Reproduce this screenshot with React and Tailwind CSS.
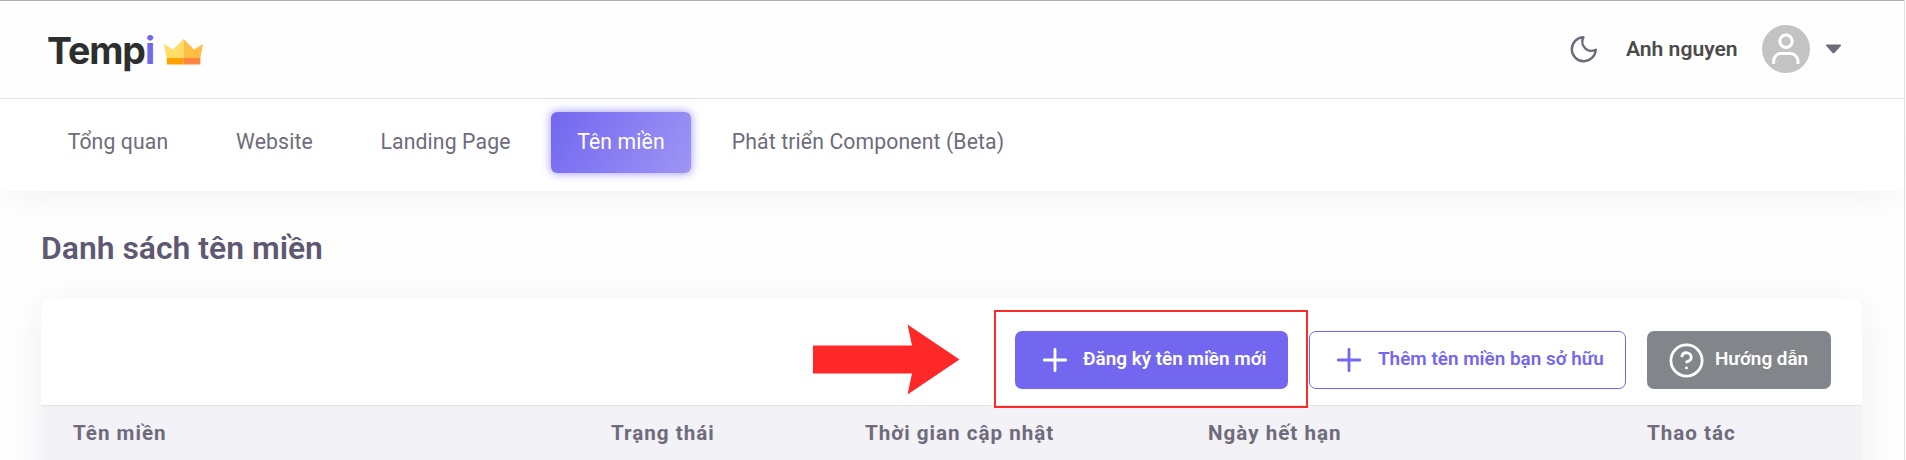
import React from "react";

const NAV = [
  { label: "Tổng quan", box: "ml-[40px] w-[156px]" },
  { label: "Website", box: "ml-[14px] w-[129px]" },
  { label: "Landing Page", box: "ml-[14px] w-[185px]" },
  { label: "Tên miền", box: "ml-[13px] w-[140px]", active: true },
  { label: "Phát triển Component (Beta)", box: "ml-[14px] w-[326px]" },
];

const COLUMNS = [
  { label: "Tên miền", width: "w-[538px]" },
  { label: "Trạng thái", width: "w-[254px]" },
  { label: "Thời gian cập nhật", width: "w-[343px]" },
  { label: "Ngày hết hạn", width: "w-[439px]" },
  { label: "Thao tác", width: "w-[200px]" },
];

function Logo() {
  return (
    <div className="ml-[47px] flex items-center">
      <div className="flex w-[109px] pt-[2px] font-['Inter'] text-[37.5px] leading-none font-[650] tracking-[-1.1px] text-[#2d2e2e]">
        <span>Temp</span>
        <span className="text-[#7367f0]">i</span>
      </div>
      <svg className="ml-[8px] mt-[5px]" width="39" height="26" viewBox="0 0 39 26">
        <path d="M0 5 L9 10.5 L19.5 0 V19.5 H2.8 Z" fill="#ffdd67" />
        <path d="M39 5 L30 10.5 L19.5 0 V19.5 H36.2 Z" fill="#ffbd43" />
        <path d="M2.8 19 H19.5 V25.5 H2.8 Z" fill="#ffa100" />
        <path d="M19.5 19 H36.4 V25.5 H19.5 Z" fill="#ff8541" />
      </svg>
    </div>
  );
}

function Moon() {
  return (
    <svg width="28" height="28" viewBox="0 0 28 28" fill="none" stroke="#6e6b7b" strokeWidth="2.4" strokeLinecap="round" strokeLinejoin="round">
      <path d="M13.5 2.2 A12 12 0 1 0 25.8 14.8 A9.2 9.2 0 0 1 13.5 2.2 Z" />
    </svg>
  );
}

function Plus() {
  return (
    <svg width="24" height="24" viewBox="0 0 24 24" fill="none" stroke="currentColor" strokeWidth="2.8" strokeLinecap="round">
      <path d="M12 1.3 V22.7 M1.3 12 H22.7" />
    </svg>
  );
}

function Help() {
  return (
    <svg width="35" height="35" viewBox="0 0 35 35" fill="none" stroke="currentColor" strokeWidth="2.8" strokeLinecap="round" strokeLinejoin="round">
      <circle cx="17.5" cy="17.5" r="15.6" />
      <path d="M12.9 12.9 A4.8 4.8 0 0 1 22.2 14.4 C22.2 17.4 17.6 18.9 17.6 18.9" />
      <path d="M17.5 24.9 H17.52" />
    </svg>
  );
}

function Header() {
  return (
    <header className="flex h-[99px] items-center justify-between border-t border-b border-t-[#aeadb3] border-b-[#e6e6e8]">
      <Logo />
      <div className="mr-[62px] flex items-center pb-[2px]">
        <Moon />
        <span className="ml-[28px] w-[112px] text-[21.1px] leading-none font-semibold text-[#4b4b4b]">Anh nguyen</span>
        <svg className="ml-[24px]" width="48" height="48" viewBox="0 0 48 48" fill="none" stroke="#fff" strokeWidth="3">
          <circle cx="24" cy="24" r="24" fill="#c3c3c3" stroke="none" />
          <circle cx="24" cy="16.3" r="6.2" />
          <path d="M11.6 39 V36 A7.5 7.5 0 0 1 19.1 28.5 H28.4 A7.5 7.5 0 0 1 35.9 36 V39" />
        </svg>
        <svg className="ml-[15px]" width="17" height="10" viewBox="0 0 17 10" fill="#6e6b7b">
          <path d="M1.8 0.5 H15.2 Q16.9 0.7 15.8 2.1 L9.6 8.7 Q8.5 9.7 7.4 8.7 L1.2 2.1 Q0.1 0.7 1.8 0.5 Z" />
        </svg>
      </div>
    </header>
  );
}

function Nav() {
  return (
    <nav className="flex h-[92px] items-start bg-white pt-[13px] text-[21.2px] tracking-[0.13px] text-[#6e6b7b] shadow-[0_12px_42px_-12px_rgba(34,41,47,0.08)]">
      {NAV.map(({ label, box, active }) => (
        <div
          key={label}
          className={
            "flex h-[61px] items-center justify-center rounded-[6px] pb-[2px] leading-none font-[450] whitespace-nowrap " +
            box +
            (active
              ? " bg-linear-[118deg] from-[#7367f0] to-[#9e95f5] text-white shadow-[0_0_9px_1px_rgba(115,103,240,0.6)]"
              : "")
          }
        >
          {label}
        </div>
      ))}
    </nav>
  );
}

export default function App() {
  return (
    <div className="relative h-[460px] w-full overflow-hidden bg-[#fefefe] font-['Roboto',sans-serif]">
      <div className="mr-px h-full border-r border-[#e2e2e4]">
        <Header />
        <Nav />
        <main className="pt-[37px] pr-[42px] pl-[41px]">
          <h1 className="h-[71px] text-[31.9px] leading-[40px] font-semibold text-[#5e5873]">Danh sách tên miền</h1>
          <section className="h-[200px] rounded-[9px] bg-white shadow-[0_6px_36px_rgba(34,41,47,0.07)]">
            <div className="flex h-[106px] items-start justify-end pt-[32px] pr-[31px] text-[18.9px] leading-none font-semibold whitespace-nowrap">
              <button className="flex h-[58px] w-[273px] items-center rounded-[7px] bg-[#7367f0] pl-[28px] text-white">
                <Plus />
                <span className="ml-[16px] pb-[2px]">Đăng ký tên miền mới</span>
              </button>
              <button className="ml-[21px] flex h-[58px] w-[317px] items-center rounded-[7px] border border-[#7367f0] pl-[27px] text-[#7367f0]">
                <Plus />
                <span className="ml-[17px] pb-[2px]">Thêm tên miền bạn sở hữu</span>
              </button>
              <button className="ml-[21px] flex h-[58px] w-[184px] items-center rounded-[7px] bg-[#82868b] pl-[22px] text-white">
                <Help />
                <span className="ml-[11px] pb-[2px]">Hướng dẫn</span>
              </button>
            </div>
            <div className="flex h-[94px] border-t border-[#e6e4ec] bg-[#f3f2f7] pt-[16px] pl-[32px] text-[20.6px] leading-[22px] font-bold tracking-[1px] text-[#6e6b7b]">
              {COLUMNS.map(({ label, width }) => (
                <div key={label} className={"shrink-0 whitespace-nowrap " + width}>
                  {label}
                </div>
              ))}
            </div>
          </section>
        </main>
      </div>
      <svg className="absolute top-[324px] left-[813px]" width="147" height="71" viewBox="0 0 147 71">
        <path d="M0 21.5 H99 L94.5 0.5 L146.5 35.5 L94.5 70.5 L99 49.5 H0 Z" fill="#ff2828" />
      </svg>
      <div className="absolute top-[310px] left-[994px] h-[98px] w-[314px] border-2 border-[#fa2b29]" />
    </div>
  );
}
